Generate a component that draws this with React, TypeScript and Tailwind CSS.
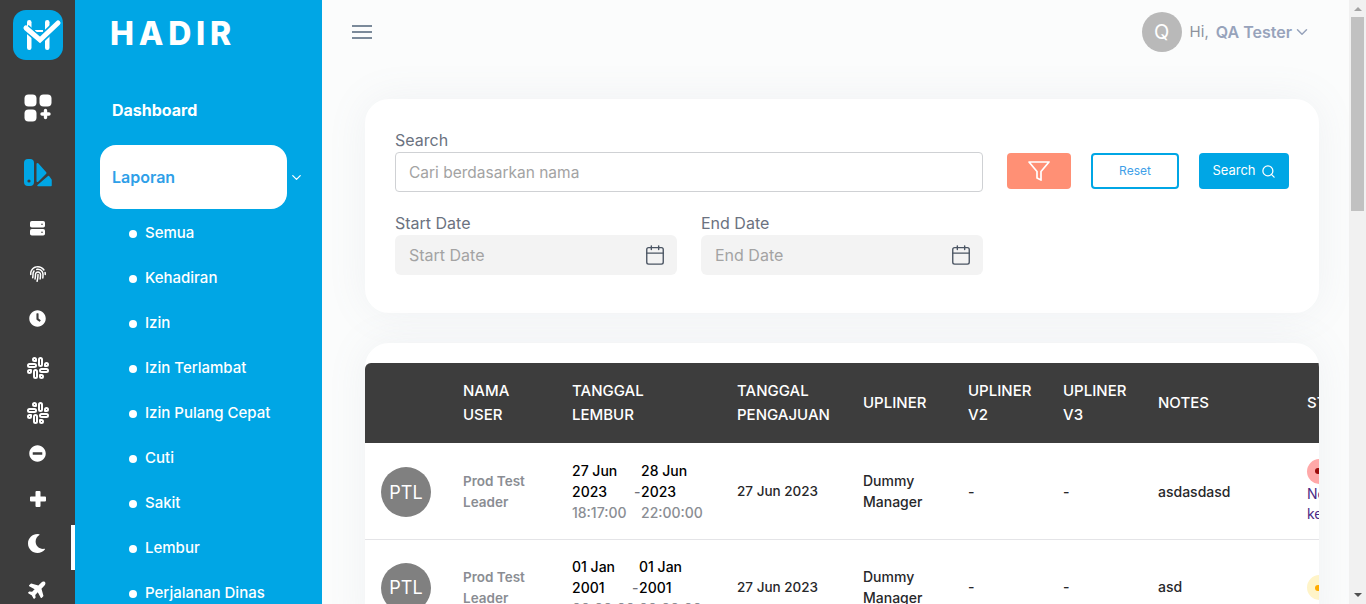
import { ReactNode } from 'react'
import { FaClock, FaFingerprint, FaMinusCircle, FaMoon, FaPlane } from 'react-icons/fa'
import { FiSlack, FiChevronDown, FiFilter, FiSearch, FiCalendar } from 'react-icons/fi'

function LogoMark() {
  return (
    <svg viewBox="0 0 50 50" className="h-[50px] w-[50px] shrink-0">
      <rect width="50" height="50" rx="13" fill="#00a6e5" />
      <rect x="14" y="10" width="4.5" height="30" rx="2.2" fill="#fff" />
      <rect x="32" y="10" width="4.5" height="30" rx="2.2" fill="#fff" />
      <rect x="22" y="20" width="8" height="2" fill="#fff" />
      <path d="M13 18 L27 30 L45 13" fill="none" stroke="#00a6e5" strokeWidth="8" />
      <path d="M13 18 L27 30 L45 13" fill="none" stroke="#fff" strokeWidth="5" strokeLinecap="round" />
    </svg>
  )
}

function DashIcon() {
  return (
    <svg viewBox="0 0 28 28" className="h-7 w-7" fill="#fff">
      <rect x="0.5" y="0.5" width="12" height="12" rx="4" />
      <rect x="15.5" y="0.5" width="12" height="12" rx="4" />
      <rect x="0.5" y="15.5" width="12" height="12" rx="4" />
      <path d="M19.8 16.5a1.7 1.7 0 0 1 3.4 0v1.8H25a1.7 1.7 0 0 1 0 3.4h-1.8v1.8a1.7 1.7 0 0 1-3.4 0v-1.8H18a1.7 1.7 0 0 1 0-3.4h1.8z" />
    </svg>
  )
}

function LaporanIcon() {
  return (
    <svg viewBox="0 0 28 28" className="h-7 w-7" fill="#00a6e5">
      <rect x="0" y="0" width="10" height="27" rx="4" />
      <circle cx="5" cy="22" r="1.6" fill="#3d3d3d" />
      <path d="M14 26.5 L24.5 17.5 L27 21 V26.5 Z" stroke="#00a6e5" strokeWidth="1.5" strokeLinejoin="round" />
      <path d="M13.5 5 L21.5 14 L13.5 22 Z" stroke="#00a6e5" strokeWidth="2" strokeLinejoin="round" />
    </svg>
  )
}

function ServerIcon() {
  return (
    <svg viewBox="0 0 15 15" className="h-[15px] w-[15px]">
      <rect width="15" height="6.5" rx="1.8" fill="#fff" />
      <rect y="8" width="15" height="6.5" rx="1.8" fill="#fff" />
      <circle cx="12" cy="3.2" r="0.8" fill="#3d3d3d" />
      <circle cx="12" cy="11.2" r="0.8" fill="#3d3d3d" />
    </svg>
  )
}

function PlusIcon() {
  return (
    <svg viewBox="0 0 16 16" className="h-4 w-4" fill="#fff">
      <path d="M5.5 1a1 1 0 0 1 1-1h3a1 1 0 0 1 1 1v4.500H15a1 1 0 0 1 1 1v3a1 1 0 0 1-1 1h-4.500V15a1 1 0 0 1-1 1h-3a1 1 0 0 1-1-1v-4.500H1a1 1 0 0 1-1-1v-3a1 1 0 0 1 1-1h4.500z" />
    </svg>
  )
}

const railItems: { cls: string; icon: ReactNode }[] = [
  { cls: 'h-[96px]', icon: <DashIcon /> },
  { cls: 'h-[34px]', icon: <LaporanIcon /> },
  { cls: 'mt-[16px] h-[45px]', icon: <ServerIcon /> },
  { cls: 'h-[45px]', icon: <FaFingerprint size={16} color="#fff" /> },
  { cls: 'h-[45px]', icon: <FaClock size={17} color="#fff" /> },
  { cls: 'mt-[4px] h-[45px]', icon: <FiSlack size={24} color="#fff" strokeWidth={2} /> },
  { cls: 'h-[45px]', icon: <FiSlack size={24} color="#fff" strokeWidth={2} /> },
  { cls: 'mt-[-4px] h-[45px]', icon: <FaMinusCircle size={17} color="#fff" /> },
  { cls: 'h-[45px]', icon: <PlusIcon /> },
  { cls: 'h-[45px] pr-[3px]', icon: <FaMoon size={19} color="#fff" /> },
  { cls: 'h-[45px]', icon: <FaPlane size={20} color="#fff" className="-rotate-45" /> },
]

const subMenu = ['Semua', 'Kehadiran', 'Izin', 'Izin Terlambat', 'Izin Pulang Cepat', 'Cuti', 'Sakit', 'Lembur', 'Perjalanan Dinas']

function Rail() {
  return (
    <aside className="relative flex h-full w-[75px] shrink-0 flex-col items-center overflow-hidden bg-[#3d3d3d] pt-[10px]">
      <LogoMark />
      {railItems.map((item, i) => (
        <div key={i} className={`flex w-full shrink-0 items-center justify-center ${item.cls}`}>
          {item.icon}
        </div>
      ))}
      <div className="absolute right-0 top-[525px] h-[45px] w-1 bg-white" />
    </aside>
  )
}

function Sidebar() {
  return (
    <aside className="flex h-full w-[247px] shrink-0 flex-col overflow-hidden bg-[#00a6e5] text-white">
      <div className="pl-[35px] pt-[14px] text-[32px] font-extrabold leading-[40px] tracking-[0.15em]">HADIR</div>
      <div className="pl-[37px] pt-[44px] text-[16px] font-bold leading-6">Dashboard</div>
      <div className="mt-[23px] flex items-center pl-[25px]">
        <div className="flex h-16 w-[187px] items-center rounded-2xl bg-white pl-3 text-[16px] font-semibold text-[#2f9fe8]">Laporan</div>
        <FiChevronDown size={15} className="ml-[2px]" />
      </div>
      <ul className="mt-[2px] pl-[54px]">
        {subMenu.map(s => (
          <li key={s} className="flex h-[45px] shrink-0 items-center gap-2 text-[15px] font-medium">
            <span className="h-2 w-2 rounded-full bg-white" />
            <span>{s}</span>
          </li>
        ))}
      </ul>
    </aside>
  )
}

function DateField({ label }: { label: string }) {
  return (
    <div className="w-[282px]">
      <div className="text-[16px] leading-5 text-[#6b7280]">{label}</div>
      <div className="mt-[2px] flex h-10 items-center justify-between rounded-md bg-[#f3f3f3] pl-[14px] pr-[11px]">
        <span className="text-[16px] text-[#a3a3a3]">{label}</span>
        <FiCalendar size={22} className="text-[#4b5563]" strokeWidth={1.5} />
      </div>
    </div>
  )
}

function FilterCard() {
  return (
    <section className="rounded-3xl bg-white px-[30px] pb-[38px] pt-[32px] shadow-[0_0_40px_rgba(120,130,150,0.09)]">
      <div className="flex items-start">
        <div className="w-[588px]">
          <div className="mb-[2px] text-[16px] leading-[19px] text-[#6b7280]">Search</div>
          <div className="flex h-10 items-center rounded border border-[#cfd1d4] pl-[13px] pt-[2px] text-[15.5px] text-[#a3a3a3]">Cari berdasarkan nama</div>
        </div>
        <button className="ml-6 mt-[22px] flex h-9 w-16 items-center justify-center rounded bg-[#ff9075] text-white">
          <FiFilter size={24} strokeWidth={1.7} />
        </button>
        <button className="ml-5 mt-[22px] h-9 w-[88px] rounded border-2 border-[#00a6e5] text-[12px] text-[#3f9fe8]">Reset</button>
        <button className="ml-5 mt-[22px] flex h-9 w-[90px] items-center justify-center gap-[5px] rounded bg-[#00a6e5] text-[13px] text-white">
          Search <FiSearch size={15} />
        </button>
      </div>
      <div className="mt-[21px] flex gap-6">
        <DateField label="Start Date" />
        <DateField label="End Date" />
      </div>
    </section>
  )
}

type Row = {
  from: [string, string, string]
  to: [string, string, string]
  notes: string
  pill: string
  dot: string
  dateW: string
  dateCls: string
  statusText?: boolean
}

const rows: Row[] = [
  { from: ['27 Jun', '2023', '18:17:00'], to: ['28 Jun', '2023', '22:00:00'], notes: 'asdasdasd', pill: 'bg-[#ffa8a8]', dot: 'bg-[#9b0d0d]', dateW: 'w-[62px]', dateCls: '', statusText: true },
  { from: ['01 Jan', '2001', '00:00:00'], to: ['01 Jan', '2001', '00:00:00'], notes: 'asd', pill: 'bg-[#fff4c8]', dot: 'bg-[#ffab00]', dateW: 'w-[60px]', dateCls: 'pt-[2px]' },
]

function DataRow({ r }: { r: Row }) {
  return (
    <tr className="h-[95px] border-b border-[#e4e4e7] text-[14px] font-medium leading-[21px] text-[#27272a]">
      <td className="pl-4 pt-[2px]">
        <div className="flex h-[50px] w-[50px] items-center justify-center rounded-full bg-[#808080] text-[18px] font-normal text-white">PTL</div>
      </td>
      <td className="pt-[2px] text-[13.5px] font-semibold text-[#8a8d93]">Prod Test Leader</td>
      <td className={r.dateCls}>
        <div className="flex items-center">
          <div className={r.dateW}>
            <div className="text-black">{r.from[0]}</div>
            <div className="text-black">{r.from[1]}</div>
            <div className="text-[#8a8d93]">{r.from[2]}</div>
          </div>
          <span className="w-[7px] text-[#71717a]">-</span>
          <div className="whitespace-nowrap">
            <div className="text-black">{r.to[0]}</div>
            <div className="text-black">{r.to[1]}</div>
            <div className="text-[#8a8d93]">{r.to[2]}</div>
          </div>
        </div>
      </td>
      <td className="pt-[1px] text-[13.5px]">27 Jun 2023</td>
      <td>
        Dummy
        <br />
        Manager
      </td>
      <td>-</td>
      <td>-</td>
      <td>{r.notes}</td>
      <td className={r.dateCls}>
        <div className={`flex h-[25px] w-[60px] items-center rounded-full pl-2 ${r.pill}`}>
          <span className={`h-[6px] w-[6px] rounded-full ${r.dot}`} />
        </div>
        {r.statusText && (
          <div className="font-normal leading-5 text-[#4c2a85]">
            Nonaktif
            <br />
            kehadiran
          </div>
        )}
      </td>
    </tr>
  )
}

function TableCard() {
  const heads = [
    '',
    <>NAMA<br />USER</>,
    <>TANGGAL<br />LEMBUR</>,
    <>TANGGAL<br />PENGAJUAN</>,
    'UPLINER',
    <>UPLINER<br />V2</>,
    <>UPLINER<br />V3</>,
    'NOTES',
    'STATUS',
  ]
  return (
    <section className="mt-[30px] w-[954px] overflow-hidden rounded-t-3xl bg-white pt-5 shadow-[0_0_40px_rgba(120,130,150,0.09)]">
      <table className="w-[1100px] table-fixed border-collapse text-left">
        <colgroup>
          <col className="w-[98px]" />
          <col className="w-[109px]" />
          <col className="w-[165px]" />
          <col className="w-[126px]" />
          <col className="w-[105px]" />
          <col className="w-[95px]" />
          <col className="w-[95px]" />
          <col className="w-[149px]" />
          <col className="w-[158px]" />
        </colgroup>
        <thead>
          <tr className="h-20 bg-[#3d3d3d] text-[15px] font-medium leading-6 text-white">
            {heads.map((h, i) => (
              <th key={i} className={`font-medium ${i === 0 ? 'rounded-tl-md' : ''}`}>
                {h}
              </th>
            ))}
          </tr>
          <tr className="h-px" />
        </thead>
        <tbody>
          {rows.map((r, i) => (
            <DataRow key={i} r={r} />
          ))}
        </tbody>
      </table>
    </section>
  )
}

function Scrollbar() {
  return (
    <div className="flex h-full w-[17px] shrink-0 flex-col items-center bg-[#f1f1f1]">
      <div className="mt-[7px] h-0 w-0 border-x-[4px] border-b-[4px] border-x-transparent border-b-[#a3a3a3]" />
      <div className="mt-[6px] h-[194px] w-[13px] bg-[#c1c1c1]" />
      <div className="mb-[7px] mt-auto h-0 w-0 border-x-[4px] border-t-[4px] border-x-transparent border-t-[#505050]" />
    </div>
  )
}

export default function App() {
  return (
    <div className="flex h-[604px] w-[1366px] overflow-hidden bg-[#fbfcfc] font-['Inter',sans-serif]">
      <Rail />
      <Sidebar />
      <main className="h-full min-w-0 flex-1 overflow-hidden">
        <header className="flex h-[99px] items-start justify-between pl-[30px] pr-[38px] pt-3">
          <div className="mt-[13px] flex h-[14px] w-5 flex-col justify-between">
            <span className="h-[2px] bg-[#7b8a9a]" />
            <span className="h-[2px] bg-[#7b8a9a]" />
            <span className="h-[2px] bg-[#7b8a9a]" />
          </div>
          <div className="flex h-10 items-center text-[16px]">
            <div className="flex h-10 w-10 items-center justify-center rounded-full bg-[#b9b9b9] text-[20px] text-white">Q</div>
            <span className="ml-2 text-[15px] text-[#8d929c]">Hi,</span>
            <span className="ml-[7px] font-semibold text-[#97a3bb]">QA Tester</span>
            <FiChevronDown size={18} className="ml-px text-[#97a3bb]" />
          </div>
        </header>
        <div className="pl-[43px]">
          <div className="w-[954px]">
            <FilterCard />
            <TableCard />
          </div>
        </div>
      </main>
      <Scrollbar />
    </div>
  )
}
